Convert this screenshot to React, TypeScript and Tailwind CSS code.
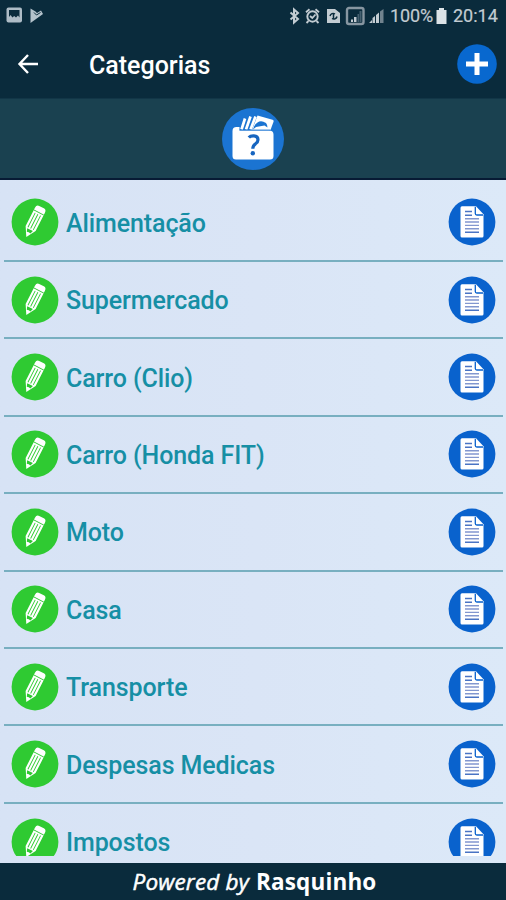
const CATEGORIES = [
  "Alimentação",
  "Supermercado",
  "Carro (Clio)",
  "Carro (Honda FIT)",
  "Moto",
  "Casa",
  "Transporte",
  "Despesas Medicas",
  "Impostos",
];

function StatusBar() {
  return (
    <div className="flex h-8 items-center justify-between pl-[4px] pr-[7px] text-[#c3ccd2]">
      <svg width="42" height="18" viewBox="0 0 42 18" className="mt-[-2px]">
        <rect x="2.500" y="1.500" width="15.500" height="15" rx="2" fill="#aebcc6" />
        <path d="M5 4h10.500v7.500l-1.500-2-2 2-1.800-1.500-1.800 1.500-1.800-2.500-1.600 2z" fill="#0a2b3c" />
        <path d="M26.500 2.500l5 3 1.500 1.500 4-2.500 2 3.500-12.500 9z" fill="#b4c2cb" />
        <path d="M30 6.500l2.500 2.500 4-2.500" fill="none" stroke="#0a2b3c" strokeWidth="1" />
      </svg>
      <div className="flex items-center">
        <svg width="98" height="20" viewBox="0 0 98 20" fill="none" stroke="currentColor">
          {/* bluetooth */}
          <path d="M2.500 6.500l7.500 6.500-4 3.500V3.500L10 7l-7.500 6.500" strokeWidth="2" />
          {/* alarm */}
          <circle cx="24.500" cy="10.500" r="5.200" strokeWidth="1.900" />
          <path d="M18 6.200l3.500-3M31 6.200l-3.500-3M20.500 15l-2 2M28.500 15l2 2M22 10l2.300 2 3.200-3.500" strokeWidth="1.800" />
          {/* sim card */}
          <path d="M39 3h8l5 4v10H39z" fill="currentColor" stroke="none" />
          <path d="M42 10a3.200 3.200 0 0 1 5-2M49 10.500a3.200 3.200 0 0 1-5 2M45.500 7.500v5.500" stroke="#0a2b3c" strokeWidth="1.500" />
          {/* signals */}
          <rect x="59" y="2" width="16.500" height="16" rx="2" stroke="#8796a1" strokeWidth="2.400" />
          <path d="M63 16v-2.500h2V16zM66 16v-5h2.500v5z" fill="currentColor" stroke="none" />
          <path d="M69.500 16V8h1.500v8zM71.500 16V5h2v11z" fill="#456070" stroke="none" />
          <path d="M81 17l3-3v3zM84.500 17v-5l2.500-2v7zM88 17V9l3-2.500V17z" fill="currentColor" stroke="none" />
          <path d="M92 17V5.500L95.500 3v14z" fill="#71838e" stroke="none" />
        </svg>
        <span className="ml-[4px] w-[43px] whitespace-nowrap text-[18px] leading-5 tracking-[-0.1px] [-webkit-text-stroke:0.2px_#c3ccd2]">
          100%
        </span>
        <svg width="11" height="18" viewBox="0 0 11 18" className="ml-[3px]">
          <path d="M3 1h5v2h2.500v14H.5V3H3z" fill="#dce3e7" />
        </svg>
        <span className="ml-[6px] w-[46px] whitespace-nowrap text-[18px] leading-5 [-webkit-text-stroke:0.2px_#c3ccd2]">
          20:14
        </span>
      </div>
    </div>
  );
}

function PencilIcon() {
  return (
    <svg width="48" height="48" viewBox="0 0 48 48" className="shrink-0">
      <circle cx="24" cy="24" r="23.400" fill="#2fca32" />
      <g transform="translate(15.300 39) rotate(27)">
        <path d="M0 0L-5.600-9.500V-30q0-3.500 3-3.500h5.200q3 0 3 3.500V-9.500z" fill="#fff" />
        <path d="M-5.600-27.500h11.200" stroke="#2fca32" strokeWidth=".9" />
        <path d="M-3-25.500V-9.500M0-25.500V-9.500M3-25.500V-9.500" stroke="#2fca32" strokeWidth=".9" />
        <path d="M-3.200-8.300l1.200 3.300q2-1 4 0l1.200-3.300z" fill="#2fca32" />
      </g>
    </svg>
  );
}

function DocumentIcon() {
  return (
    <svg width="48" height="48" viewBox="0 0 48 48" className="shrink-0">
      <circle cx="24" cy="24" r="23.400" fill="#0962cd" />
      <path d="M14 8.200h14l7.500 8V38q0 1.500-1.500 1.500H14q-1.500 0-1.500-1.500V9.700q0-1.500 1.500-1.500z" fill="#fff" />
      <path d="M27.300 8.800v6.700q0 1.500 1.500 1.500H35" fill="none" stroke="#0962cd" strokeWidth="1.300" />
      <path d="M17 13.500h7M17 17.300h7M17 34.200h14" stroke="#4a74c4" strokeWidth="1.400" />
      <path d="M17 20.700h14M17 24h14M17 27.400h14M17 30.800h14" stroke="#8297cf" strokeWidth="1.400" />
    </svg>
  );
}

function WalletIcon() {
  return (
    <svg width="64" height="64" viewBox="0 0 64 64">
      <circle cx="32" cy="32" r="31" fill="#1b74d2" />
      <path d="M11.500 24q0-4 4-4h3v3.500H48q4.500 0 4.500 4V49q0 3.500-3.500 3.500H15q-3.500 0-3.500-3.500z" fill="#fff" />
      <path d="M20.500 22.500l3.500-11M25 22.500l4.500-13M29.500 22.500l5-13" stroke="#fff" strokeWidth="2.700" />
      <path d="M36.500 8.500l15 4.200q1.500.5 1 2l-3 8.300H31z" fill="#fff" />
      <path d="M36.500 15.500q3.500-2.800 8.500.5 1.500 2 1.500 4.500l-3-2-8.500 1.500-3 2.500q.5-4 4.500-7z" fill="#1b74d2" />
      <path d="M18.500 23h31" stroke="#1b74d2" strokeWidth=".8" />
      <path d="M27.800 30.500q1.500-1.700 4.500-1.700 4.700 0 4.700 4 0 2.300-2.500 4-2.700 1.700-2.700 5" fill="none" stroke="#1765c0" strokeWidth="3.200" />
      <circle cx="31.800" cy="46.300" r="2.200" fill="#1765c0" />
    </svg>
  );
}

function CategoryRow({ name }: { name: string }) {
  return (
    <li className="ml-1 mr-[3px] flex h-[77.430px] shrink-0 items-center border-b-2 border-[#78afc0] px-[7px]">
      <PencilIcon />
      <span className="ml-[7px] flex-1 whitespace-nowrap pt-[3px] text-[25px] font-medium leading-8 tracking-[-0.100px] text-[#168fa5]">
        {name}
      </span>
      <DocumentIcon />
    </li>
  );
}

export default function App() {
  return (
    <div className="flex h-[900px] w-[506px] flex-col overflow-hidden bg-[#0a2b3c] font-['Roboto',sans-serif]">
      <StatusBar />
      <header className="flex h-[66px] shrink-0 items-center pl-[17px] pr-[9px]">
        <svg width="22" height="22" viewBox="0 0 22 22" fill="none" stroke="#fff" strokeWidth="2.400" className="mt-[-2px]">
          <path d="M11 2L2.500 11l8.500 9M2.500 11H21" />
        </svg>
        <h1 className="ml-[50px] flex-1 pt-[2px] text-[25px] font-medium leading-8 text-white">Categorias</h1>
        <svg width="40" height="40" viewBox="0 0 40 40" className="mt-[-2px]">
          <circle cx="20" cy="20" r="19.800" fill="#0868cf" />
          <path d="M20 9v22M9 20h22" stroke="#fff" strokeWidth="5" />
        </svg>
      </header>
      <div className="flex h-[82px] shrink-0 items-center justify-center border-b-2 border-t border-b-[#071a34] border-t-[#123647] bg-[#1a4150]">
        <WalletIcon />
      </div>
      <main className="h-[683px] shrink-0 bg-linear-to-r from-[#d7e3f5] via-[#dae5f6] to-[#dce9f8] pb-[7px] pt-[4.500px]">
        <ul className="flex h-full flex-col overflow-hidden">
          {CATEGORIES.map((name) => (
            <CategoryRow key={name} name={name} />
          ))}
        </ul>
      </main>
      <footer className="flex h-[37px] shrink-0 items-center justify-center gap-[7px] pl-[3px] font-['Open_Sans','Noto_Sans',sans-serif] text-[22.500px] leading-7 text-white">
        <span className="italic tracking-[0.150px] [-webkit-text-stroke:0.500px_#fff]">Powered by</span>
        <span className="font-bold tracking-[0.150px]">Rasquinho</span>
      </footer>
    </div>
  );
}
